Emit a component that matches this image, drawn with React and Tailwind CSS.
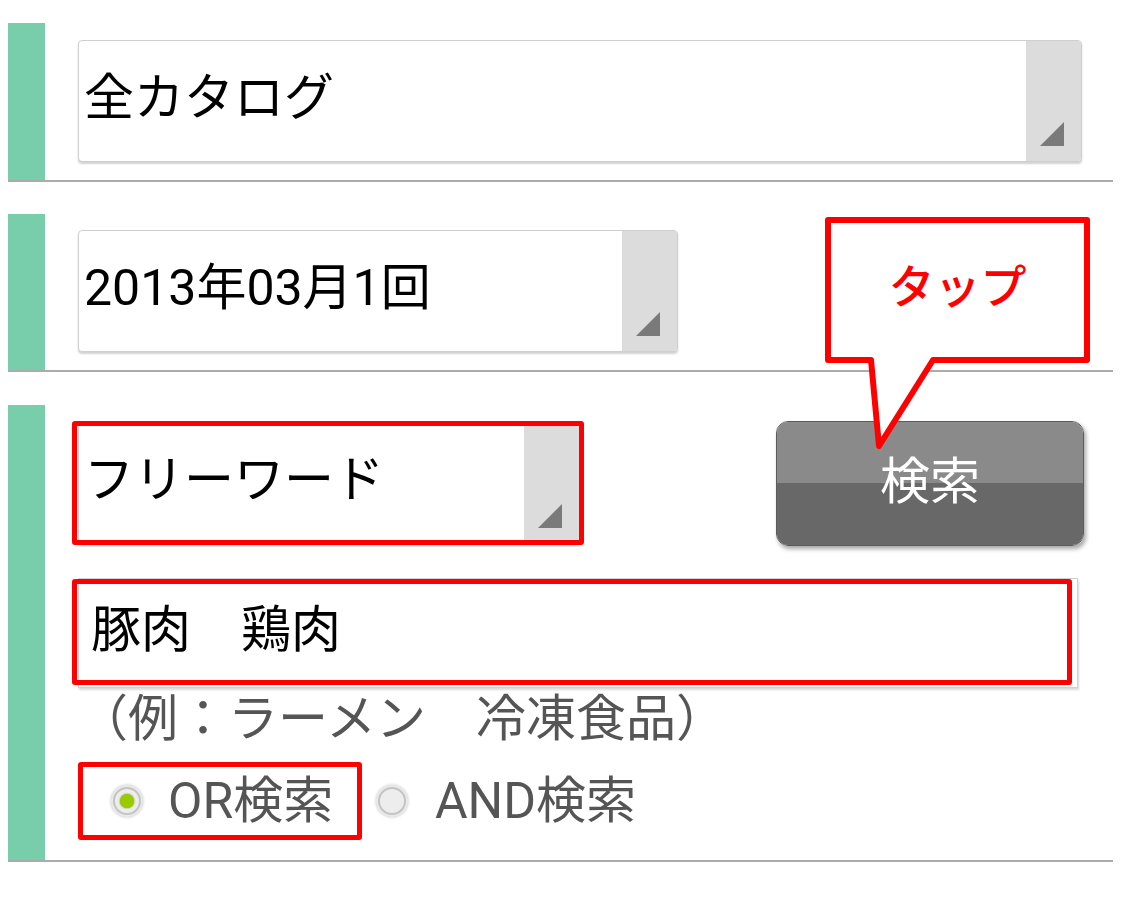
import React from "react";

const jp = { fontFamily: '"Roboto", "Noto Sans CJK JP", sans-serif' };

const Section = ({ className, pad, children }) => (
  <div className={`ml-[8px] mr-[12px] flex border-b-2 border-[#ababab] ${className}`}>
    <div className="w-[37px] shrink-0 bg-[#78cdaa]" />
    <div className={`flex-1 pl-[33px] pr-[31px] ${pad}`}>{children}</div>
  </div>
);

const Corner = () => (
  <svg width="24" height="24" viewBox="0 0 24 24" className="absolute right-[17px] bottom-[15px]">
    <polygon points="24,0 24,24 0,24" fill="#7a7a7a" />
  </svg>
);

const SelectBox = ({ value, className }) => (
  <div
    className={`relative flex h-[122px] overflow-hidden rounded-[4px] border border-[#cfcfcf] bg-white shadow-[0_2px_2px_rgba(0,0,0,0.18)] ${className}`}
  >
    <div className="flex flex-1 items-center pl-[5px] pb-[6px] text-[50px] leading-none text-black">
      {value}
    </div>
    <div className="relative w-[55px] shrink-0 bg-[#dcdcdc]">
      <Corner />
    </div>
  </div>
);

const Radio = ({ checked }) => (
  <div className="flex h-[32px] w-[32px] items-center justify-center rounded-full bg-[#e9e9e9] shadow-[0_0_3px_rgba(0,0,0,0.25)]">
    <div className="flex h-[28px] w-[28px] items-center justify-center rounded-full border-2 border-[#c4c4c4] bg-[#ededed]">
      {checked && <div className="h-[14px] w-[14px] rounded-full bg-[#99cc00] shadow-[0_0_2px_#6b8f00]" />}
    </div>
  </div>
);

export default function App() {
  return (
    <div className="relative h-[897px] w-[1125px] overflow-hidden bg-white pt-[23px]" style={jp}>
      {/* カタログ */}
      <Section pad="pt-[17px] pb-[18px]">
        <SelectBox value="全カタログ" />
      </Section>

      {/* 号 */}
      <Section className="mt-[32px]" pad="pt-[16px] pb-[18px]">
        <SelectBox value="2013年03月1回" className="w-[600px]" />
      </Section>

      {/* フリーワード */}
      <Section className="mt-[33px]" pad="pt-[17px] pb-[20px]">
        <div className="flex items-start">
          <div className="relative w-[502px]">
            <SelectBox value="フリーワード" />
            <div className="absolute -left-[6px] -right-[4px] -top-[1px] -bottom-[1px] rounded-[3px] border-[5px] border-[#ff0000]" />
          </div>
          <button className="relative ml-auto -mt-[1px] -mr-[2px] flex h-[125px] w-[308px] flex-col overflow-hidden rounded-[12px] border border-[#5c5c5c] shadow-[2px_3px_4px_rgba(0,0,0,0.35)]">
            <div className="h-[61px] bg-[#8a8a8a]" />
            <div className="flex-1 bg-[#686868]" />
            <span className="absolute inset-0 flex items-center justify-center pb-[4px] text-[50px] leading-none text-white">
              検索
            </span>
          </button>
        </div>

        <div className="relative mt-[32px] w-[1000px]">
          <div className="flex h-[110px] items-center border border-[#d0d0d0] bg-white pl-[12px] pb-[6px] text-[50px] leading-none text-black shadow-[1px_2px_2px_rgba(0,0,0,0.15)]">
            豚肉　鶏肉
          </div>
          <div className="absolute -left-[6px] right-[6px] top-[1px] bottom-[3px] rounded-[3px] border-[5px] border-[#ff0000]" />
        </div>

        <div className="mt-[6px] text-[50px] leading-[50px] text-[#555555]">（例：ラーメン　冷凍食品）</div>

        <div className="mt-[18px] flex h-[78px] items-center">
          <div className="relative flex h-[78px] w-[284px] items-center pl-[33px]">
            <Radio checked />
            <span className="ml-[25px] text-[50px] leading-none text-[#555555]">OR検索</span>
            <div className="absolute inset-0 rounded-[3px] border-[5px] border-[#ff0000]" />
          </div>
          <div className="ml-[14px] flex items-center">
            <Radio />
            <span className="ml-[27px] text-[50px] leading-none text-[#555555]">AND検索</span>
          </div>
        </div>
      </Section>

      {/* 吹き出し */}
      <svg
        className="absolute left-[820px] top-[212px]"
        width="275"
        height="245"
        viewBox="820 212 275 245"
      >
        <path
          d="M828 220 H1087 V360 H933 L879 446 L871 360 H828 Z"
          fill="#ffffff"
          stroke="#ff0000"
          strokeWidth="6"
          strokeLinejoin="round"
        />
      </svg>
      <div className="absolute left-[826px] top-[218px] flex h-[144px] w-[263px] items-center justify-center pb-[6px] text-[46px] font-medium leading-none text-[#ff0000]">
        タップ
      </div>
    </div>
  );
}
